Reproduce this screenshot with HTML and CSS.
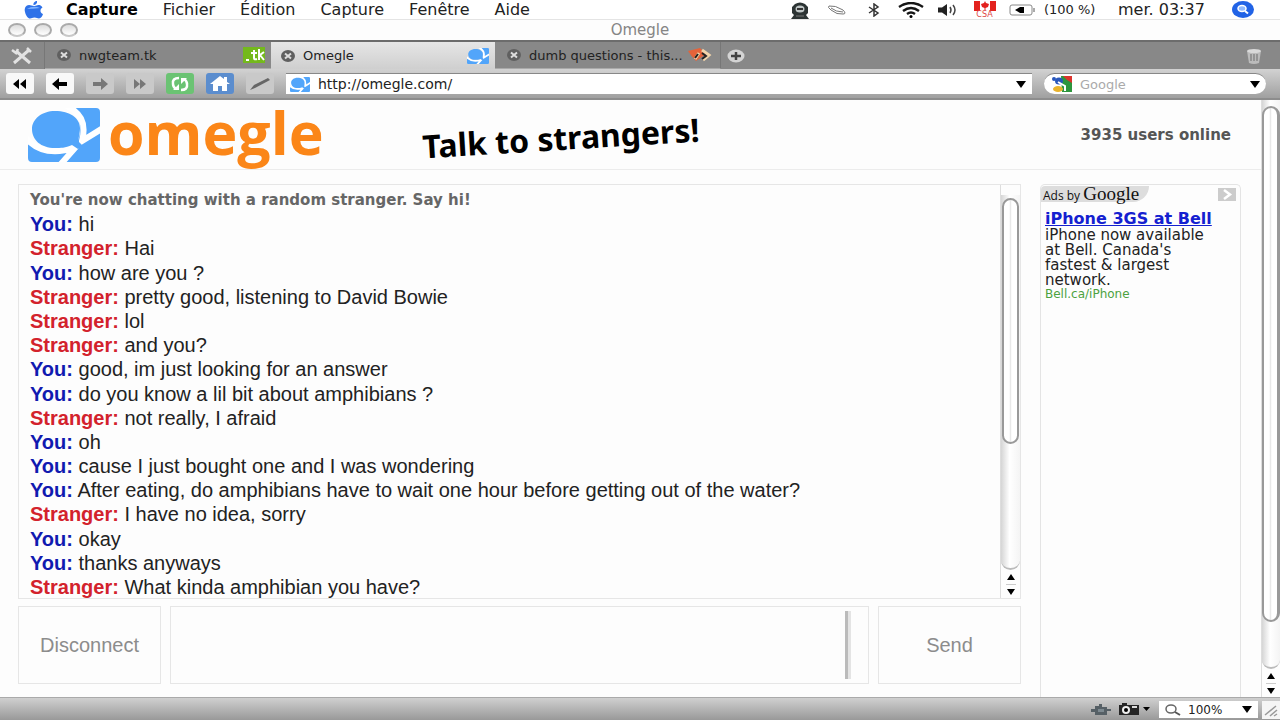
FILE: index.html
```html
<!DOCTYPE html>
<html lang="fr">
<head>
<meta charset="utf-8">
<meta name="viewport" content="width=device-width, initial-scale=1">
<title>Omegle</title>
<link rel="stylesheet" href="styles.css">
</head>
<body>
<svg class="defs" aria-hidden="true">
  <symbol id="omegle-mark" viewBox="0 0 72 54" preserveAspectRatio="none">
    <path d="M0 30C8 44 24 47 48 41L50 33C55 20 52 4 40 0H68Q72 0 72 4V50Q72 54 68 54H4Q0 54 0 50Z" fill="#52a5fa"/>
    <path d="M37-3C52 4 59 14 54 33L75 20M-3 29C8 43 24 47 47 40L32 57" fill="none" stroke="#fff" stroke-width="6"/>
    <path d="M27 3C42 3 52 10 52 20C52 26 50 29 51 34L55 38L50 41L44 37C37 40 33 40 27 40C13 40 4 32 4 21C4 11 14 3 27 3Z" fill="#52a5fa"/>
  </symbol>
  <symbol id="tab-close" viewBox="0 0 14 12">
    <ellipse cx="7" cy="6" rx="7" ry="6" fill="#606060"/>
    <path d="M4 3.5L10 8.5M10 3.5L4 8.5" stroke="#ddd" stroke-width="2"/>
  </symbol>
  <symbol id="down" viewBox="0 0 10 7"><path d="M0 0H10L5 7Z"/></symbol>
</svg>

<nav class="menubar" aria-label="Menu">
  <svg class="apple" viewBox="0 0 20 18"><path d="M13 0C11 0 9 2 9.500 4C12 4 13.500 2 13 0ZM10 5C8 5 7 4 5 4C2 4 0 7 1 11C2 15 4 17.500 6 17.500C8 17.500 8 16.500 10.500 16.500C13 16.500 13 17.500 15 17.500C17 17.500 18.500 15 19 13C16 12 15.500 8 18.500 6.500C17 4 15 4 13.500 4.200C12 4.500 11 5 10 5Z" fill="#2f72e8"/><path d="M3 8Q9 4 16 7Q9 8 3 8" fill="#7db2ff"/></svg>
  <div class="menus">
    <button class="strong">Capture</button><button>Fichier</button><button>Édition</button><button>Capture</button><button>Fenêtre</button><button>Aide</button>
  </div>
  <div class="extras">
    <span><svg width="20" height="18" viewBox="0 0 20 18"><path d="M5 3Q10 0 15 3L18 6V12L16 14L19 18H1L4 14L2 12V6Z" fill="#2c3434"/><ellipse cx="10" cy="8" rx="4.500" ry="3.500" fill="#bfc6c6"/><path d="M7 8H13" stroke="#333" stroke-width="2"/><path d="M6 15H14" stroke="#777"/></svg></span>
    <span><svg width="20" height="12" viewBox="0 0 20 12"><path d="M2 2Q8 1 16 6Q20 10 16 10Q10 11 4 6Q0 3 2 2ZM4 4Q9 8 16 8" fill="none" stroke="#777"/></svg></span>
    <span><svg width="12" height="14" viewBox="0 0 12 14"><path d="M1 4L10 10L6 13V1L10 4L1 10" fill="none" stroke="#333" stroke-width="1.500"/></svg></span>
    <span><svg width="26" height="16" viewBox="0 0 26 16"><path d="M1 5Q13-3 25 5M5 9Q13 3 21 9M9 12Q13 9 17 12" fill="none" stroke="#161616" stroke-width="2.400"/><circle cx="13" cy="14.500" r="1.500"/></svg></span>
    <span><svg width="20" height="14" viewBox="0 0 20 14"><path d="M0 4.500H4L9 1V13L4 9.500H0Z" fill="#222"/><path d="M12 4Q14 7 12 10M15 2Q19 7 15 12" fill="none" stroke="#444" stroke-width="1.500"/></svg></span>
    <span class="flag"><svg width="22" height="10" viewBox="0 0 22 10"><path d="M0 0H6V10H0ZM16 0H22V10H16Z" fill="#e3221e"/><path d="M11 0L12 2L15 3L14 6L11.500 7V9H10.500V7L8 6L7 3L10 2Z" fill="#e3221e"/></svg><small>CSA</small></span>
    <span><svg width="26" height="12" viewBox="0 0 26 12"><rect x="1" y="1" width="22" height="10" rx="2" fill="#fff" stroke="#888"/><path d="M24 4H26V8H24Z" fill="#aaa"/><path d="M6 6L11 3H15V9H11Z"/></svg></span>
  </div>
  <span class="battery">(100 %)</span>
  <time>mer. 03:37</time>
  <button class="spotlight" aria-label="Spotlight"><svg width="22" height="17" viewBox="0 0 22 17"><ellipse cx="11" cy="8.500" rx="11" ry="8.500" fill="#2163e6"/><ellipse cx="10" cy="7.500" rx="4" ry="3" fill="#8fbaff" stroke="#fff" stroke-width="1.500"/><path d="M13 10L16 12.500" stroke="#fff" stroke-width="2"/></svg></button>
</nav>

<header class="titlebar">
  <div class="lights"><button aria-label="Fermer"></button><button aria-label="Réduire"></button><button aria-label="Agrandir"></button></div>
  <span>Omegle</span>
</header>

<div class="tabbar">
  <button class="tools" aria-label="Outils"><svg width="22" height="18" viewBox="0 0 22 18"><path d="M3 16L18 3M5 4L19 16" stroke="#e2e2e2" stroke-width="3"/><path d="M1 3L5 6L7 2M16 1L20 5" fill="none" stroke="#e2e2e2" stroke-width="2.500"/></svg></button>
  <div class="tab"><svg class="close"><use href="#tab-close"/></svg><span>nwgteam.tk</span><svg width="22" height="16" viewBox="0 0 22 16"><rect width="22" height="16" fill="#74b91c"/><path d="M3 13H6M8 6H14M11 3V11Q11 13 14 12M16 2V13M21 5L17 8L21 13" fill="none" stroke="#fff" stroke-width="2"/></svg></div>
  <div class="tab active"><svg class="close"><use href="#tab-close"/></svg><span>Omegle</span><svg width="22" height="16"><use href="#omegle-mark"/></svg></div>
  <div class="tab last"><svg class="close"><use href="#tab-close"/></svg><span>dumb questions - this...</span><svg width="24" height="14" viewBox="0 0 24 14"><path d="M0 3L12 0L18 6L8 13Q3 8 0 3" fill="#e5633a"/><path d="M14 2L21 7L15 12M11 5L7 11" fill="none" stroke="#f1d4aa" stroke-width="3"/><path d="M14 5L18 8L14 11M10 6L7 10" fill="none" stroke="#222" stroke-width="2"/></svg></div>
  <button class="add" aria-label="Nouvel onglet"><svg width="18" height="14" viewBox="0 0 18 14"><ellipse cx="9" cy="7" rx="8.500" ry="6.500" fill="#d4d4d4"/><path d="M4 7H14M9 3V11" stroke="#444" stroke-width="2.500"/></svg></button>
  <button class="trash" aria-label="Corbeille"><svg width="16" height="16" viewBox="0 0 16 16"><path d="M1 3H15L13 15Q8 17 3 15Z" fill="#bbb"/><ellipse cx="8" cy="3" rx="7" ry="2" fill="#d9d9d9"/><path d="M5 6V13M8 6V13M11 6V13" stroke="#888" stroke-width="1.500"/></svg></button>
</div>

<div class="toolbar">
  <button class="on" aria-label="Rembobiner"><svg width="16" height="10" viewBox="0 0 16 10"><path d="M7 0V10L1 5ZM14 0V10L8 5Z"/></svg></button>
  <button class="on" aria-label="Précédent"><svg width="16" height="12" viewBox="0 0 16 12"><path d="M0 6L7 0V4H15V8H7V12Z"/></svg></button>
  <button aria-label="Suivant"><svg width="16" height="12" viewBox="0 0 16 12"><path d="M16 6L9 0V4H1V8H9V12Z" fill="#777"/></svg></button>
  <button aria-label="Avance"><svg width="16" height="10" viewBox="0 0 16 10"><path d="M2 0V10L8 5ZM8 0V10L14 5Z" fill="#777"/></svg></button>
  <button class="reload" aria-label="Recharger"><svg width="20" height="16" viewBox="0 0 20 16"><path d="M9 2Q2 2 3 8Q3 11 6 13M11 14Q18 14 17 8Q17 5 14 3" fill="none" stroke="#fff" stroke-width="2.500"/><path d="M3 14H9V8ZM17 2H11V8Z" fill="#fff"/></svg></button>
  <button class="home" aria-label="Accueil"><svg width="20" height="16" viewBox="0 0 20 16"><path d="M0 8L10 0L14 3V1H17V6L20 8H17V15H12V10H8V15H3V8Z" fill="#fff"/></svg></button>
  <button aria-label="Modifier"><svg width="22" height="14" viewBox="0 0 22 14"><path d="M1 13L5 8L19 1L21 3L6 11Z" fill="#666"/></svg></button>
  <label class="address"><svg width="20" height="15"><use href="#omegle-mark"/></svg><input type="text" value="http://omegle.com/" aria-label="Adresse"><svg class="down"><use href="#down"/></svg></label>
  <label class="search"><svg width="20" height="16" viewBox="0 0 20 16"><path d="M9 0H20V16H10Z" fill="#2d963d"/><path d="M11 0H20V7L15 4Z" fill="#dc342d"/><ellipse cx="7" cy="5" rx="4" ry="3.500" fill="#2957bc"/><circle cx="2" cy="3" r="2" fill="#2957bc"/><ellipse cx="6" cy="13" rx="5" ry="3" fill="#e9b32c"/><path d="M6 6L13 10V15" fill="none" stroke="#fff" stroke-width="2"/></svg><input type="text" placeholder="Google" aria-label="Google"><svg class="down"><use href="#down"/></svg></label>
</div>

<div class="viewport">
  <div class="page">
    <header class="site-head">
      <svg class="logo" role="img" aria-label="Omegle"><use href="#omegle-mark"/></svg>
      <h1>omegle</h1>
      <p class="tagline">Talk to strangers!</p>
      <p class="online">3935 users online</p>
    </header>
    <div class="columns">
      <main>
        <section class="log">
          <ol>
            <li class="notice">You're now chatting with a random stranger. Say hi!</li>
            <li><b class="you">You:</b> hi</li>
            <li><b>Stranger:</b> Hai</li>
            <li><b class="you">You:</b> how are you ?</li>
            <li><b>Stranger:</b> pretty good, listening to David Bowie</li>
            <li><b>Stranger:</b> lol</li>
            <li><b>Stranger:</b> and you?</li>
            <li><b class="you">You:</b> good, im just looking for an answer</li>
            <li><b class="you">You:</b> do you know a lil bit about amphibians ?</li>
            <li><b>Stranger:</b> not really, I afraid</li>
            <li><b class="you">You:</b> oh</li>
            <li><b class="you">You:</b> cause I just bought one and I was wondering</li>
            <li><b class="you">You:</b> After eating, do amphibians have to wait one hour before getting out of the water?</li>
            <li><b>Stranger:</b> I have no idea, sorry</li>
            <li><b class="you">You:</b> okay</li>
            <li><b class="you">You:</b> thanks anyways</li>
            <li><b>Stranger:</b> What kinda amphibian you have?</li>
          </ol>
          <div class="scroll inner"><div class="track"><div class="thumb"></div></div><svg class="arrows" viewBox="0 0 10 24"><path d="M1 8L5 2L9 8ZM1 17L5 23L9 17Z"/><path d="M0 12.500H10" stroke="#ccc"/></svg></div>
        </section>
        <form class="compose">
          <button type="button">Disconnect</button>
          <div class="entry"><textarea aria-label="Message"></textarea><div class="grip"></div></div>
          <button type="button">Send</button>
        </form>
      </main>
      <aside>
        <div class="ad-head"><span class="by">Ads by <b>Google</b></span><button aria-label="Suivant"><svg width="18" height="13" viewBox="0 0 18 13"><rect width="18" height="13" fill="#ccc"/><path d="M6 2L12 6.500L6 11" fill="none" stroke="#fff" stroke-width="2.500"/></svg></button></div>
        <div class="ad"><a href="#">iPhone 3GS at Bell</a><p>iPhone now available at Bell. Canada's fastest &amp; largest network.</p><cite>Bell.ca/iPhone</cite></div>
      </aside>
    </div>
  </div>
  <div class="scroll outer"><div class="track"><div class="thumb"></div></div><svg class="arrows" viewBox="0 0 10 24"><path d="M1 8L5 2L9 8ZM1 17L5 23L9 17Z"/><path d="M0 12.500H10" stroke="#ccc"/></svg></div>
</div>

<footer class="statusbar">
  <svg width="20" height="12" viewBox="0 0 20 12"><path d="M0 5H4V2H8V0H11V3H16V5H20V7H16V11H4V8H0Z" fill="#566066"/><path d="M7 5H13V8H7Z" fill="#7d8990"/></svg>
  <svg width="32" height="13" viewBox="0 0 32 13"><path d="M0 2H3V0H8V2H20V12H0Z" fill="#252525"/><circle cx="7" cy="7" r="4" fill="#eee"/><circle cx="7" cy="7" r="2"/><path d="M13 3H18V5H13Z" fill="#ddd"/><path d="M24 4H31L27.500 8Z"/></svg>
  <button class="zoom"><svg width="16" height="12" viewBox="0 0 16 12"><ellipse cx="6" cy="5" rx="5" ry="4" fill="none" stroke="#666" stroke-width="1.500"/><path d="M10 8L15 11" stroke="#555" stroke-width="2"/></svg><span>100%</span><svg class="down"><use href="#down"/></svg></button>
  <svg class="resize" viewBox="0 0 18 18"><path d="M3 14L14 5M8 15L15 9M12 15L15 13" stroke="#999" stroke-width="1.500"/></svg>
</footer>
</body>
</html>
```
FILE: styles.css
```css
* { box-sizing: border-box; }
body {
  margin: 0;
  height: 100vh;
  display: flex;
  flex-direction: column;
  overflow: hidden;
  background: #fdfdfd;
  color: #222;
  font-family: "DejaVu Sans", sans-serif;
}
button, input, textarea { font: inherit; color: inherit; border: 0; padding: 0; margin: 0; background: none; }
p, h1, ol { margin: 0; padding: 0; list-style: none; }
svg { display: block; flex: none; }
.defs { position: absolute; width: 0; height: 0; }
.down { width: 10px; height: 7px; }

.menubar { display: flex; align-items: center; flex: none; height: 20px; padding: 0 26px 0 24px; font-size: 16px; line-height: 20px; border-bottom: 1px solid #e4e4e4; background: #fff; }
.apple { width: 20px; height: 18px; margin-right: 22px; }
.menus { display: flex; gap: 25px; flex: 1; }
.menus .strong { font-weight: bold; color: #000; }
.extras { display: flex; margin-right: 4px; }
.extras span { width: 37px; display: flex; align-items: center; justify-content: center; }
.extras .flag { flex-direction: column; }
.flag small { font-size: 8px; line-height: 7px; color: #d44; }
.battery { width: 74px; font-size: 13px; }
time { width: 114px; }

.titlebar { display: grid; grid-template-columns: 1fr auto 1fr; align-items: center; flex: none; height: 20px; padding: 0 8px; font-size: 15px; line-height: 20px; color: #858585; }
.lights { display: flex; gap: 8px; }
.lights button { width: 18px; height: 14px; border: 2px solid #aaa; border-bottom-color: #c8c8c8; border-radius: 50%; background: linear-gradient(#ddd, #fff); }

.tabbar { display: flex; align-items: stretch; flex: none; height: 29px; padding-right: 18px; border-top: 2px solid #6c6c6c; background: #888; font-size: 13px; }
.tools { width: 45px; display: flex; align-items: center; justify-content: center; border-right: 1px solid #777; }
.tab { flex: none; width: 226px; display: flex; align-items: center; gap: 8px; padding: 0 6px 0 12px; border-bottom: 1px solid #aaa; }
.tab span { flex: 1; white-space: nowrap; }
.tab.active { width: 224px; margin: 0; padding-left: 10px; background: linear-gradient(#e6e6e6, #cfcfcf); border-bottom: 0; }
.tab.last { padding-right: 8px; gap: 4px; border-right: 1px solid #777; }
.tab.last .close { margin-right: 4px; }
.close { width: 14px; height: 12px; }
.add { margin-left: 6px; }
.add, .trash { display: flex; align-items: center; }
.trash { margin-left: auto; }

.toolbar { display: flex; align-items: center; gap: 12px; flex: none; height: 31px; padding: 0 14px 0 6px; border-bottom: 2px solid #8d8d8d; background: linear-gradient(#d2d2d2, #a0a0a0); }
.toolbar button { flex: none; width: 28px; height: 21px; display: flex; align-items: center; justify-content: center; border-radius: 3px; background: #c9c9c9; }
.toolbar .on { background: #f8f8f8; }
.toolbar .reload { background: #6bc373; }
.toolbar .home { background: #5b8dce; }
.address, .search { display: flex; align-items: center; height: 21px; background: #fff; border-top: 1px solid #888; }
.address { flex: 1; gap: 8px; padding: 0 6px 0 4px; font-size: 14px; }
.search { width: 222px; gap: 8px; padding: 0 6px 0 8px; border-radius: 11px; font-size: 13px; }
.address input, .search input { flex: 1; min-width: 0; height: 20px; outline: 0; }
.search input::placeholder { color: #aaa; opacity: 1; }

.viewport { flex: 1; min-height: 0; display: flex; }
.page { flex: 1; min-width: 0; display: flex; flex-direction: column; }
.site-head { display: flex; align-items: center; flex: none; height: 70px; padding: 0 30px 0 28px; border-bottom: 1px solid #ececec; }
.logo { width: 72px; height: 54px; }
h1 { margin-left: 8px; padding-bottom: 6px; font: bold 59px/60px "Open Sans", sans-serif; color: #fb8618; }
.tagline { margin-left: 98px; padding-top: 6px; font: bold 32px/40px "Noto Sans", sans-serif; color: #000; white-space: nowrap; transform: rotate(-3.5deg); }
.online { margin-left: auto; font-size: 15px; font-weight: bold; color: #555; }

.columns { flex: 1; min-height: 0; display: flex; gap: 19px; padding: 14px 20px 0 18px; }
main { flex: 1; min-width: 0; display: flex; flex-direction: column; gap: 7px; padding-bottom: 13px; font-family: "Liberation Sans", Arial, sans-serif; }
.log { flex: 1; min-height: 0; display: flex; border: 1px solid #e6e6e6; }
.log ol { flex: 1; display: flex; flex-direction: column; justify-content: space-between; padding: 4px 12px 0 11px; font-size: 20px; line-height: 22px; }
.log b { color: #d3222c; }
.log .you { color: #101ab0; }
.log .notice { font: bold 15px/22px "DejaVu Sans", sans-serif; color: #666; }
.compose { display: flex; gap: 9px; height: 78px; font-size: 20px; color: #8c8c8c; }
.compose > button { width: 143px; border: 1px solid #e6e6e6; }
.entry { flex: 1; display: flex; padding: 4px 17px 4px 4px; border: 1px solid #e6e6e6; }
textarea { flex: 1; resize: none; outline: 0; }
.grip { width: 6px; border-left: 3px solid #bbb; background: #e4e4e4; }

aside { width: 201px; border: 1px solid #e4e4e4; border-bottom: 0; border-radius: 5px 5px 0 0; }
.ad-head { display: flex; align-items: center; justify-content: space-between; height: 18px; padding-right: 4px; }
.by { height: 16px; padding: 0 10px 0 2px; border-radius: 4px 0 16px 0; background: #ddd; font: 12px/16px "Open Sans", sans-serif; color: #111; white-space: nowrap; }
.by b { font: 19px/16px "Liberation Serif", serif; }
.ad { padding: 7px 4px; font-size: 15px; line-height: 15px; }
.ad p { padding-right: 16px; }
.ad a { font-size: 16px; line-height: 18px; font-weight: bold; color: #1420d0; white-space: nowrap; }
.ad cite { display: block; font-size: 12px; line-height: 13px; font-style: normal; color: #4ca23f; }

.scroll { display: flex; flex-direction: column; align-items: center; flex: none; border-left: 1px solid #ddd; }
.inner { width: 20px; padding-top: 10px; }
.outer { width: 19px; }
.track { flex: 1; width: 100%; border-radius: 0 0 10px 10px; background: linear-gradient(90deg, #d5d5d5, #fff 45%, #f4f4f4); border-bottom: 2px solid #bbb; }
.thumb { border: 2px solid #999; border-radius: 9px; background: linear-gradient(90deg, #fff 40%, #e8e8e8 50%, #fff 60%); }
.inner .thumb { height: 66%; margin: 3px 1px 0; }
.outer .thumb { height: 91%; margin-top: 6px; border-right-width: 3px; }
.arrows { width: 10px; height: 24px; margin: 2px 0; }

.statusbar { display: flex; align-items: center; gap: 8px; flex: none; height: 23px; padding-top: 1px; border-top: 1px solid #aaa; background: linear-gradient(#d0d0d0, #999); }
.statusbar > svg:first-child { margin-left: auto; }
.zoom { display: flex; align-items: center; gap: 7px; width: 99px; height: 17px; padding: 0 6px; background: #fff; font-size: 12px; }
.zoom .down { margin-left: auto; }
.resize { width: 18px; height: 18px; margin-left: -4px; background: #f5f5f5; }
```
